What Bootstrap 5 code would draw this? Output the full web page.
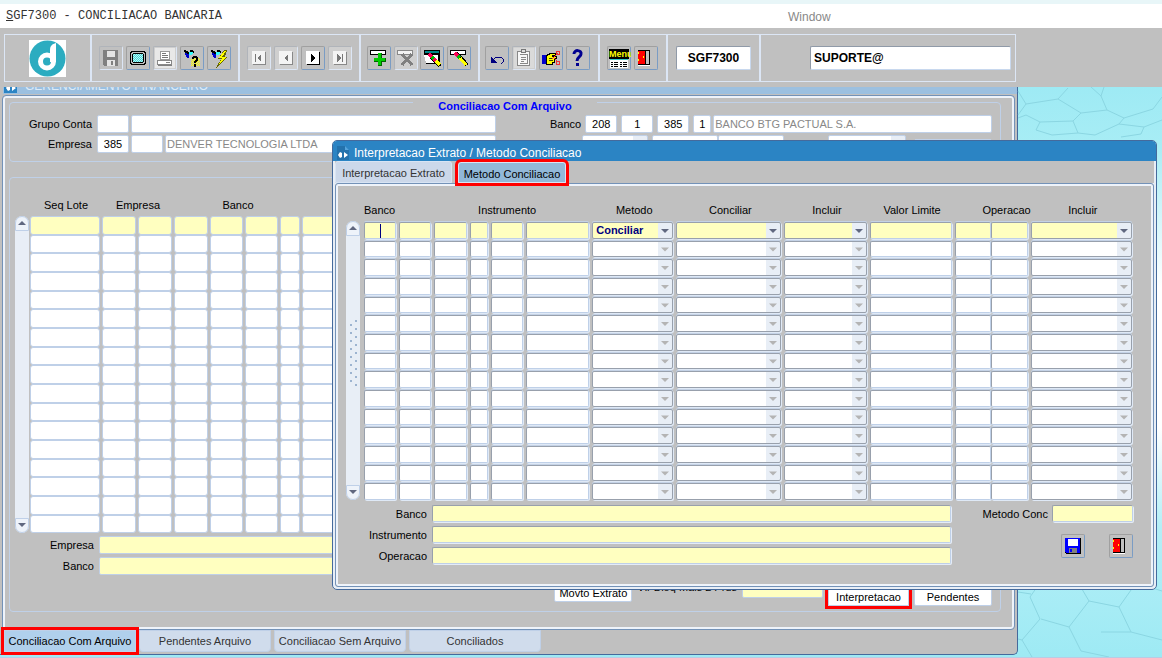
<!DOCTYPE html>
<html lang="pt-BR">
<head>
<meta charset="utf-8">
<meta name="viewport" content="width=device-width, initial-scale=1">
<title>SGF7300 - CONCILIACAO BANCARIA</title>
<link rel="stylesheet" href="https://cdn.jsdelivr.net/npm/bootstrap@5.3.0/dist/css/bootstrap.min.css">
<style>
:root{--face:#c0c0c0;--edge:#bfd0e8;--light:#e8eef6;--navy:#456a9c;--yellow:#ffffc0}
body{font:11px/14px "Liberation Sans",Arial,sans-serif;color:#000;background:var(--face)}
input,select,button{font:inherit;color:inherit;min-width:0;padding:0;border-radius:2px}
table{border-collapse:separate;border-spacing:0;table-layout:fixed}
th{font-weight:400;white-space:nowrap;padding:0;vertical-align:top}
td{padding:0}
svg{display:block}
.topstrip{height:4px;background:#e8f6f8}
.menubar{height:24px;background:#fff}
.menubar a{color:#333;font:12px/24px "Liberation Mono",monospace;text-decoration:none}
.menubar .win{color:#888;font:12px/26px "Liberation Sans",sans-serif}
.menubar .lead-col{width:788px;padding-left:6px}
.toolbar{height:59px;padding:6px 146px 5px 4px}
.toolframe{border:1px solid #dce6f5}
.tgroup{border-right:2px solid #dce6f5}
.tgroup:last-child{border-right:0}
.logo-cell{width:87px}
.tool{width:24px;height:24px;border:1px solid;border-color:#a0a0a0 #7a9cc4 #7a9cc4 #a0a0a0;background:var(--face);border-radius:2px;flex:none}
.tool svg{margin:-1px;shape-rendering:crispEdges}
.tool:disabled{border-color:#b0b4ba #dce6f5 #dce6f5 #b0b4ba;background:#cfcfcf}
.tool.flat:disabled{background:var(--face)}
.bigfield{height:24px;border:1px solid;border-color:#909aa8 #c8d8ee #c8d8ee #909aa8;font-weight:700;font-size:12px;padding:0 3px}
.desktop{background:linear-gradient(#9eeaf4 0,#a8edf5 60px,#fff 200px,#fff 340px,#b4eff7 440px,#9eeaf4 100%);border-bottom:1px solid #b8cce4}
.hexes{right:0;top:0;width:145px;height:571px}
.mainwin{margin:-14px 144px 0 0;background:var(--face);border-right:1px solid var(--navy);border-bottom:1px solid var(--navy);border-radius:0 0 5px 0}
.maintitle{height:21px;margin-left:3px;padding-left:1px;background:#9cc0e0;color:#dcebf8;font-size:12px}
.mainpanel{margin:1px 2px 0;border:1px solid #7392b8;border-radius:4px 4px 4px 0;box-shadow:inset 0 0 0 2px #eef3fa;padding:0 13px 17px 6px}
.boxed{border:1px solid var(--edge);border-radius:4px}
.head{margin-top:-3px;padding:4px 0 8px}
.head legend{float:none;width:auto;margin:0 auto;padding:8px 25px 0;font:bold 11px/10px "Liberation Sans",sans-serif;color:#00f}
.headrow{display:flex;justify-content:space-between;align-items:flex-start;height:18px;margin:0 8px 2px 0}
.leftset{margin-right:54px}
.rightset{width:442px}
.fld{height:18px;border:1px solid var(--edge);background:#fff;padding:0 1px}
.fld.sel{background:#fff linear-gradient(#e8eef6,#e8eef6) right/14px 100% no-repeat;appearance:none}
.grey{color:#888}
.yel{background:var(--yellow)}
.lblw{width:82px;text-align:right;margin-right:5px;flex:none}
.lots-lbl{width:79px;text-align:right;margin-right:5px;flex:none}
.near{margin-right:2px}
.w18{width:18px;flex:none}.w32{width:32px;flex:none}.w64{width:66px;flex:none}.w74{width:78px;flex:none}
.body2{margin-top:15px;padding:20px 8px 5px 5px}
.grid{width:100%}
.grid tr{height:19px}
.grid tbody tr:nth-child(3n+2){height:18px}
.grid td{height:inherit;line-height:0}
.grid input,.grid select{width:100%;border:1px solid var(--edge);background:#fff;display:block}
.grid tbody tr:first-child input,.grid tbody tr:first-child select{background-color:var(--yellow)}
.lots td{padding-right:2px}
.lots input{height:19px;border-radius:3px}
.lots tr:nth-child(3n+2) input{height:18px}
.lots thead tr{height:18px}
.method thead tr{height:21px}
.method th{padding-top:3px}
.method td{padding-right:3px}
.method td.joined{padding-right:0}
.method input,.method select{height:17px;border-color:#98a0ac var(--edge) var(--edge) #98a0ac;box-shadow:1px 1px 0 #dfe9f6,0 -1px 0 #c4d2e6;padding:0 3px;text-align:left}
.method tr:nth-child(3n+2) input,.method tr:nth-child(3n+2) select{height:16px}
.method select{appearance:none;border-color:#98a0ac;color:#000080;font-weight:700;line-height:15px;
 background:#fff url("data:image/svg+xml,%3Csvg xmlns='http://www.w3.org/2000/svg' width='14' height='17'%3E%3Cpath fill='%23e8eef6' d='M0 0h14v17H0z'/%3E%3Cpath fill='%23b4b4b4' d='M3 7h8L7 11z'/%3E%3C/svg%3E") right center no-repeat}
.method tr:first-child select{background-image:url("data:image/svg+xml,%3Csvg xmlns='http://www.w3.org/2000/svg' width='14' height='17'%3E%3Cpath fill='%23e8eef6' d='M0 0h14v17H0z'/%3E%3Cpath fill='%23606880' d='M3 7h8L7 11z'/%3E%3C/svg%3E")}
.method tbody tr:first-child td:first-child input{background:linear-gradient(#000080,#000080) 15px 1px/1px 14px no-repeat var(--yellow)}
.scroller{width:14px;background:var(--light);flex:none;border-radius:7px;display:flex;flex-direction:column}
.scroller button{height:15px;width:14px;border:1px solid var(--edge);background:#eef3fa;border-radius:7px 7px 0 0}
.scroller button:last-child{border-radius:0 0 7px 7px;margin-top:auto}
.scroller button svg{margin:auto}
.lotbar{margin-top:18px;margin-right:1px;height:317px}
.metbar{margin-top:21px;margin-right:4px;height:279px}
.metbar .grip{margin:84px auto 0}
.lotfield{margin-top:3px}
.actions{margin-top:5px;gap:5px}
.push{height:18px;border:1px solid var(--edge);background:#fff;width:78px}
.wide{width:81px}
.tabs button{border:1px solid;border-color:var(--edge);background:#d0dcec;color:#333;height:22px;width:132px;border-radius:0 0 4px 4px}
.tabs button.on{background:#b0d0ec;color:#000}
.tabs{padding:0 0 2px 4px;gap:3px}
button.marked,.tabs button.marked{outline:3px solid #f00;position:relative;z-index:1;border-radius:0}
.dialog-win{left:332px;right:5px;top:53px;background:var(--light);border:1px solid var(--navy);border-radius:5px;z-index:5}
.dtitle{height:20px;background:#2b84c4;color:#fff;font-size:12px;line-height:22px;padding-left:3px;border-radius:4px 4px 0 0}
.dtabs{background:var(--face);height:22px;margin:0 2px;gap:6px}
.dtabs button{border:1px solid #d8e4f4;background:#ccd8ea;color:#333;width:117px;border-radius:3px 3px 0 0;padding-top:2px}
.dtabs button.on{background:#92b8d8;color:#000;width:108px;margin-top:1px}
.dpanel{background:var(--face);border:1px solid #7392b8;border-radius:3px;margin:0 2px 2px;padding:16px 18px 22px 10px;box-shadow:inset 0 0 0 2px #eef3fa}
.dfld{height:17px;border:1px solid;border-color:#98a0ac var(--edge) var(--edge) #98a0ac;box-shadow:1px 1px 0 #e4ecf8}
.dlbl{width:81px;text-align:right;margin-right:5px;flex:none}
</style>
</head>
<body class="min-vh-100 d-flex flex-column overflow-hidden">
<div class="topstrip"></div>
<nav class="menubar d-flex" aria-label="Menu">
  <div class="lead-col"><a href="#"><u>S</u>GF7300 - CONCILIACAO BANCARIA</a></div>
  <a href="#" class="win">Window</a>
</nav>

<div class="toolbar">
 <div class="toolframe d-flex h-100" role="toolbar" aria-label="Ferramentas">
  <div class="tgroup logo-cell d-flex align-items-center justify-content-center">
   <svg width="37" height="37" viewBox="0 0 37 37" role="img" aria-label="Denver"><path fill="#fff" d="M0 0h37v37H0z"/><circle cx="18.500" cy="18.500" r="18" fill="#2cacc0"/><circle cx="18" cy="21.500" r="6.500" fill="none" stroke="#fff" stroke-width="5"/><path fill="#fff" d="M27 3c-4 1-6 3-6 7v12h6z"/><path fill="#2cacc0" d="M14 21c2-1 3-2 5-2l-1 2z"/></svg>
  </div>
  <div class="tgroup d-flex align-items-center justify-content-between" style="width:148px;padding:0 7px">
   <button class="tool flat" disabled aria-label="Salvar"><svg width="24" height="24"><path fill="#808080" d="M4 4h15v16H5l-1-1z"/><path fill="#e4e4e4" d="M8 5h8v6H8zM8 14h8v6H8z"/><path fill="#808080" d="M12 15h2v4h-2z"/></svg></button>
   <button class="tool" aria-label="Tela"><svg width="24" height="24"><path fill="#000" d="M5 5h14v1h1v12h-1v1H5v-1H4V6h1z"/><path fill="#c0c0c0" d="M6 6h12v1h1v10h-1v1H6v-1H5V7h1z"/><path fill="#000" d="M7 7h10v1h1v8h-1v1H7v-1H6V8h1z"/><path fill="#aff" d="M7 8h10v8H7z"/><path stroke="#5cc" stroke-dasharray="1 1" d="M7 8.500h10M8 9.500h9M7 10.500h10M8 11.500h9M7 12.500h10M8 13.500h9M7 14.500h10M8 15.500h9"/></svg></button>
   <button class="tool" disabled aria-label="Imprimir"><svg width="24" height="24"><path fill="#e8e8e8" d="M2 2h20v20H2z"/><path fill="#fff" stroke="#999" d="M7.500 5.500h9v8h-9z"/><path stroke="#777" d="M9 7.500h4M9 9.500h6M9 11.500h6"/><path fill="#fff" stroke="#888" d="M4.500 14.500h14v4h-14z"/><path fill="#808080" d="M5 19h14v1H5zM13 16h4v1h-4z"/></svg></button>
   <button class="tool" aria-label="Consultar"><svg width="24" height="24"><path stroke="#ff0" stroke-dasharray="1 1" d="M12 12.500h8M11 13.500h9M12 14.500h8M11 15.500h9M12 16.500h8M11 17.500h9M12 18.500h8M11 19.500h9"/><path fill="#000" d="M4 4h2v1h2v1h1v3H7V7H5V6H4zM10 4h3v1h1v2h-3v1h-1z"/><path fill="#00c" d="M5 7h2v1h2v4H7v-1H6V9H5z"/><path fill="#3ff" d="M9 6h4v2h-1v1H9z"/><path fill="#000" d="M13 10h4v1h1v4h-1v1h-1v1h-2v-2h1v-1h1v-2h-2v1h-2v-2h1zM14 18h2v3h-2z"/></svg></button>
   <button class="tool" aria-label="Executar consulta"><svg width="24" height="24"><path fill="#000" d="M4 4h2v1h2v1h1v3H7V7H5V6H4zM10 4h3v1h1v2h-3v1h-1z"/><path fill="#00c" d="M5 7h2v1h2v4H7v-1H6V9H5z"/><path fill="#3ff" d="M9 6h4v2h-1v1H9z"/><path fill="#660" d="M20 4h-3l-6 9h3l-5 9 12-11h-3z"/><path fill="#ff0" d="M19 5h-2l-5 7h3l-4 8 8-9h-4z"/></svg></button>
  </div>
  <div class="tgroup d-flex align-items-center justify-content-between" style="width:121px;padding:0 7px">
   <button class="tool" disabled aria-label="Primeiro"><svg width="24" height="24"><path fill="#888" d="M6 6h13v13H6z"/><path fill="#f4f4f4" d="M5 5h13v13H5z"/><path fill="#777" d="M8 8h1v8H8zM14 8v8l-4-4z"/></svg></button>
   <button class="tool" disabled aria-label="Anterior"><svg width="24" height="24"><path fill="#888" d="M6 6h13v13H6z"/><path fill="#f4f4f4" d="M5 5h13v13H5z"/><path fill="#777" d="M14 8v8l-4-4z"/></svg></button>
   <button class="tool" aria-label="Proximo"><svg width="24" height="24"><path fill="#000" d="M6 6h13v13H6z"/><path fill="#fff" d="M5 5h13v13H5z"/><path fill="#000" d="M10 8v8l4-4z"/></svg></button>
   <button class="tool" disabled aria-label="Ultimo"><svg width="24" height="24"><path fill="#888" d="M6 6h13v13H6z"/><path fill="#f4f4f4" d="M5 5h13v13H5z"/><path fill="#777" d="M14 8h1v8h-1zM9 8v8l4-4z"/></svg></button>
  </div>
  <div class="tgroup d-flex align-items-center justify-content-between" style="width:119px;padding:0 7px 0 6px">
   <button class="tool" aria-label="Inserir"><svg width="24" height="24"><path fill="#000" d="M3 4h16v5H3z"/><path fill="#fff" d="M4 5h14v3H4z"/><path fill="#060" d="M11 7h4v5h4v4h-4v4h-4v-4H7v-4h4z"/><path fill="#0c0" d="M11 7h3v5h4v3h-4v4h-3v-4H7v-3h4z"/></svg></button>
   <button class="tool" disabled aria-label="Remover"><svg width="24" height="24"><path fill="#888" d="M3 4h16v5H3z"/><path fill="#f4f4f4" d="M4 5h14v3H4z"/><path stroke="#808080" stroke-width="3" d="M8 8l10 11M18 8L8 19"/></svg></button>
   <button class="tool" aria-label="Limpar registro"><svg width="24" height="24"><path fill="#000" d="M4 4h16v14H6V9H4z"/><path fill="#088" d="M5 5h14v2H5z"/><path fill="#fff" d="M4 9h14v8H6z"/><path stroke="#000" d="M10.500 10.500l8 9"/><path stroke="#000" stroke-width="4" d="M10 9l10 11"/><path stroke="#f05" stroke-width="3" d="M9 8l4 4"/><path stroke="#0b0" stroke-width="3" d="M12 11l2 2"/><path stroke="#f05" stroke-width="3" d="M14 13l2 2"/><path stroke="#ff0" stroke-width="3" d="M16 15l4 4"/></svg></button>
   <button class="tool" aria-label="Limpar campo"><svg width="24" height="24"><path fill="#000" d="M3 4h16v5H3z"/><path fill="#fff" d="M4 5h14v3H4z"/><path stroke="#000" stroke-width="4" d="M9 7l11 12"/><path stroke="#f05" stroke-width="3" d="M8 7l3 3"/><path stroke="#0b0" stroke-width="3" d="M11 10l2 2"/><path stroke="#ff0" stroke-width="3" d="M13 12l6 7"/></svg></button>
  </div>
  <div class="tgroup d-flex align-items-center justify-content-between" style="width:120px;padding:0 8px 0 5px">
   <button class="tool" aria-label="Desfazer"><svg width="24" height="24"><path fill="none" stroke="#000080" d="M7 15l4-4h5l2 2v3l-2 2"/><path fill="#000080" d="M6 11v6h6z"/></svg></button>
   <button class="tool" disabled aria-label="Editar"><svg width="24" height="24"><path fill="#dadada" d="M2 2h20v20H2z"/><path fill="#f8f8f8" stroke="#888" d="M5.500 5.500h12v14h-12z"/><path fill="#ddd" stroke="#777" d="M9.500 3.500h4v3h-4z"/><path fill="none" stroke="#888" d="M7.500 8.500h8v9h-8M9 11.500h5M9 13.500h5M9 15.500h3"/></svg></button>
   <button class="tool" aria-label="Lista de valores"><svg width="24" height="24"><path fill="#00c" d="M3 9h4v9H3z"/><path fill="#ff0" stroke="#000" d="M7.500 9.500l4-2h5v2h-3v1h4v2h-2v4h-2v2h-6z"/><path stroke="#440" d="M10 12.500h4M10 14.500h4"/><path fill="none" stroke="#e33" d="M17.500 5.500h3v3h-3zM17.500 15.500h3v3h-3zM13 13l6-6M14 11l5 5"/></svg></button>
   <button class="tool" aria-label="Ajuda"><svg width="24" height="24" style="shape-rendering:auto"><path fill="none" stroke="#000090" stroke-width="3" d="M8 8c0-5 8-4 7 0 0 3-4 3-4 7"/><path fill="#000090" d="M10 17h3v3h-3z"/></svg></button>
  </div>
  <div class="tgroup d-flex align-items-center justify-content-between" style="width:68px;padding:0 8px 0 7px">
   <button class="tool" aria-label="Menu"><svg width="24" height="24" style="shape-rendering:auto"><path fill="#000" d="M2 3h20v10H2z"/><text x="2" y="11" font-size="9" font-weight="700" fill="#ff0" style="font-family:'Liberation Sans Narrow','Liberation Sans',sans-serif">Menu</text><path fill="#3cc" d="M3 13h18v1H3z"/><path fill="#fff" d="M3 14h18v8H3z"/><path stroke="#000" stroke-dasharray="2 1 4 2" d="M4 16.500h7M4 18.500h7M4 20.500h7M13 16.500h7M13 18.500h7M13 20.500h7"/></svg></button>
   <button class="tool" aria-label="Sair"><svg width="24" height="24"><path fill="#fff" d="M4 19h12v1H4z"/><path fill="#000" d="M4 4h12v15H4z"/><path fill="#c0c0c0" d="M12 5h3v13h-3z"/><path fill="#f00" d="M4 5h7v13H4z"/><path fill="#ff0" d="M9 10h1v2H9zM4 6h1v2H4zM4 13h1v2H4z"/></svg></button>
  </div>
  <div class="tgroup d-flex align-items-center ps-2" style="width:93px"><input class="bigfield text-center" style="width:75px" value="SGF7300" aria-label="Programa"></div>
  <div class="tgroup flex-grow-1 d-flex align-items-center justify-content-end pe-1"><input class="bigfield" style="width:201px" value="SUPORTE@" aria-label="Usuario"></div>
 </div>
</div>

<main class="desktop flex-grow-1 position-relative overflow-hidden">
 <svg class="hexes position-absolute" viewBox="0 0 145 571" fill="none" stroke="#8bd6e2" stroke-width="1" aria-hidden="true">
  <path d="M1 4l8 13 32-5 10-11M41 12l23 14 26-3M9 17L1 28M64 26l-8 8-33 1-14-7-8 3M87 0l-3 9 6 14 17 8 29-9 9-12M84 9l-10-9M107 31l-5 6 25 3 18-7M23 35l-4 8 16 5 26-2-5-12M61 46l17 2 24-11M127 40l-3 7-20 3"/>
  <path d="M1 505l13 2M31 500l-18-8M27 490l-14 20M13 510l10 22-18 21-4-1M5 553l10 17M24 532l28 8M52 540l20-26M72 514l-13-22M59 492l12-7M72 514l30 6M102 520l17-24M119 496l-14-22M119 496l26 8M102 520l12 25-30 0M52 540l12 24 28 6M114 545l31 8"/>
 </svg>

 <section class="mainwin" aria-label="Gerenciamento Financeiro">
  <div class="maintitle d-flex align-items-center"><svg width="13" height="15" class="mt-1 me-2" aria-hidden="true"><path fill="#2b84c4" d="M0 0h13v15H0z"/><path fill="#fff" d="M2 10l2-3 2 1v4l-2 1zM8 7l4 3-4 3z"/></svg><span class="pt-1">GERENCIAMENTO FINANCEIRO</span></div>
  <div class="mainpanel">
   <fieldset class="boxed head">
    <legend>Conciliacao Com Arquivo</legend>
    <div class="headrow">
     <div class="d-flex align-items-center flex-grow-1 leftset"><label class="lblw" for="gc">Grupo Conta</label><input id="gc" class="fld w32 near"><input class="fld flex-grow-1" aria-label="Nome do grupo"></div>
     <div class="d-flex align-items-center rightset"><label for="bc" class="me-1">Banco</label><input id="bc" class="fld w32 text-center me-1" value="208"><input class="fld w32 text-center me-1" value="1" aria-label="Agencia"><input class="fld w32 text-center me-1" value="385" aria-label="Empresa do banco"><input class="fld w18 text-center near" value="1" aria-label="Digito"><input class="fld flex-grow-1 grey" value="BANCO BTG PACTUAL S.A." aria-label="Nome do banco"></div>
    </div>
    <div class="headrow mb-0">
     <div class="d-flex align-items-center flex-grow-1 leftset"><label class="lblw" for="em">Empresa</label><input id="em" class="fld w32 text-center near" value="385"><input class="fld w32 near"  aria-label="Filial"><input class="fld flex-grow-1 grey" value="DENVER TECNOLOGIA LTDA" aria-label="Nome da empresa"></div>
     <div class="d-flex align-items-start rightset ps-4"><select class="fld sel w64 ms-2 me-1" aria-label="Situacao"><option></option></select><input class="fld w64" aria-label="Data inicial"><input class="fld w64" aria-label="Data final"><select class="fld sel w74 ms-auto me-2" aria-label="Tipo"><option></option></select><input class="fld w74 mt-1" aria-label="Valor"></div>
    </div>
   </fieldset>

   <div class="boxed body2">
    <div class="d-flex">
     <div class="scroller lotbar"><button aria-label="Subir"><svg width="8" height="5"><path fill="#606880" d="M4 0l4 4H0z"/></svg></button><button aria-label="Descer"><svg width="8" height="5"><path fill="#606880" d="M0 0h8L4 4z"/></svg></button></div>
     <table class="grid lots"><colgroup><col style="width:72px"><col style="width:36px"><col style="width:36px"><col style="width:36px"><col style="width:35px"><col style="width:35px"><col style="width:22px"><col></colgroup>
      <thead><tr class="text-center"><th scope="col">Seq Lote</th><th scope="col" colspan="2">Empresa</th><th scope="col" colspan="4">Banco</th><th></th></tr></thead><tbody id="lots"></tbody></table>
    </div>
    <div class="d-flex align-items-center lotfield"><label for="e2" class="lots-lbl">Empresa</label><input id="e2" class="fld yel" style="width:60%"></div>
    <div class="d-flex align-items-center lotfield"><label for="b2" class="lots-lbl">Banco</label><input id="b2" class="fld yel" style="width:60%"></div>
    <div class="d-flex justify-content-end align-items-end actions">
     <button class="push mb-1">Movto Extrato</button><label for="vb" class="mb-2 pb-1">Vlr Bloq Mais 2 Prds</label><input id="vb" class="fld yel wide mb-2"><button class="push wide marked">Interpretacao</button><button class="push">Pendentes</button>
    </div>
   </div>
  </div>
  <div class="tabs d-flex"><button class="on marked">Conciliacao Com Arquivo</button><button>Pendentes Arquivo</button><button>Conciliacao Sem Arquivo</button><button>Conciliados</button></div>
 </section>

 <section class="dialog-win position-absolute" role="dialog" aria-label="Interpretacao Extrato / Metodo Conciliacao">
  <div class="dtitle d-flex align-items-center"><svg width="14" height="16" class="me-1 mt-1" aria-hidden="true"><path fill="#2472ac" d="M1 1h8l4 4v10H1z"/><path fill="#55a4dc" d="M9 1l4 4H9z"/><path fill="#fff" d="M2 10l2-3 2 1v4l-2 1zM8 7l4 3-4 3z"/></svg><span class="pt-1">Interpretacao Extrato / Metodo Conciliacao</span></div>
  <div class="dtabs d-flex"><button>Interpretacao Extrato</button><button class="on marked">Metodo Conciliacao</button></div>
  <div class="dpanel">
   <div class="d-flex">
    <div class="scroller metbar"><button aria-label="Subir"><svg width="8" height="5"><path fill="#606880" d="M4 0l4 4H0z"/></svg></button>
     <svg class="grip" width="10" height="68"><path stroke="#9db4d0" stroke-width="2" stroke-dasharray="2 6" d="M8 0v68M3 4v60"/></svg>
     <button aria-label="Descer"><svg width="8" height="5"><path fill="#606880" d="M0 0h8L4 4z"/></svg></button></div>
    <table class="grid method"><colgroup><col style="width:35px"><col style="width:35px"><col style="width:36px"><col style="width:21px"><col style="width:35px"><col style="width:66px"><col style="width:84px"><col style="width:108px"><col style="width:85px"><col style="width:85px"><col style="width:36px"><col style="width:40px"><col style="width:104px"></colgroup>
     <thead><tr class="text-center"><th scope="col" class="text-start">Banco</th><th></th><th></th><th scope="col" colspan="3" class="text-start ps-2">Instrumento</th><th scope="col">Metodo</th><th scope="col">Conciliar</th><th scope="col">Incluir</th><th scope="col">Valor Limite</th><th scope="col" colspan="2" class="text-end">Operacao</th><th scope="col">Incluir</th></tr></thead><tbody id="method"></tbody></table>
   </div>
   <div class="d-flex justify-content-between">
    <div class="d-flex flex-column gap-1 pt-1" style="width:605px">
     <div class="d-flex align-items-center"><label class="dlbl" for="d1">Banco</label><input id="d1" class="dfld yel flex-grow-1"></div>
     <div class="d-flex align-items-center"><label class="dlbl" for="d2">Instrumento</label><input id="d2" class="dfld yel flex-grow-1"></div>
     <div class="d-flex align-items-center"><label class="dlbl" for="d3">Operacao</label><input id="d3" class="dfld yel flex-grow-1"></div>
    </div>
    <div class="pt-1 near">
     <div class="d-flex align-items-center"><label class="me-1" for="mc">Metodo Conc</label><input id="mc" class="dfld yel wide"></div>
     <div class="d-flex justify-content-end gap-4 mt-2 pt-1">
      <button class="tool" aria-label="Salvar"><svg width="24" height="24"><path fill="#000" d="M4 4h16v16H5l-1-1z"/><path fill="#00f" d="M4 4h15v15H5l-1-1z"/><path fill="#fff" d="M7 5h10v7H7z"/><path fill="#808080" d="M8 14h8v5H8z"/><path fill="#00f" d="M9 15h2v3H9z"/></svg></button>
      <button class="tool" aria-label="Sair"><svg width="24" height="24"><path fill="#fff" d="M4 19h12v1H4z"/><path fill="#000" d="M4 4h12v15H4z"/><path fill="#c0c0c0" d="M12 5h3v13h-3z"/><path fill="#f00" d="M4 5h7v13H4z"/><path fill="#ff0" d="M9 10h1v2H9zM4 6h1v2H4zM4 13h1v2H4z"/></svg></button>
     </div>
    </div>
   </div>
  </div>
 </section>
</main>

<script src="https://cdn.jsdelivr.net/npm/bootstrap@5.3.0/dist/js/bootstrap.bundle.min.js"></script>
<script>
const text = name => `<td><input aria-label="${name}"></td>`;
const drop = (name, value = '') => `<td><select aria-label="${name}"><option>${value}</option></select></td>`;

const lotCols = ['Seq Lote', 'Empresa', 'Filial', 'Banco', 'Agencia', 'Conta', 'Digito', 'Nome'];
document.getElementById('lots').innerHTML =
  Array.from({length: 17}, () => '<tr>' + lotCols.map(text).join('') + '</tr>').join('');

document.getElementById('method').innerHTML = Array.from({length: 15}, (_, i) => '<tr>' +
  ['Banco', 'Agencia', 'Conta', 'Digito', 'Instrumento', 'Nome do instrumento'].map(text).join('') +
  drop('Metodo', i ? '' : 'Conciliar') + drop('Conciliar') + drop('Incluir') + text('Valor Limite') +
  '<td class="joined"><input aria-label="Operacao"></td>' + text('Operacao complemento') + drop('Incluir operacao') +
  '</tr>').join('');
</script>
</body>
</html>
